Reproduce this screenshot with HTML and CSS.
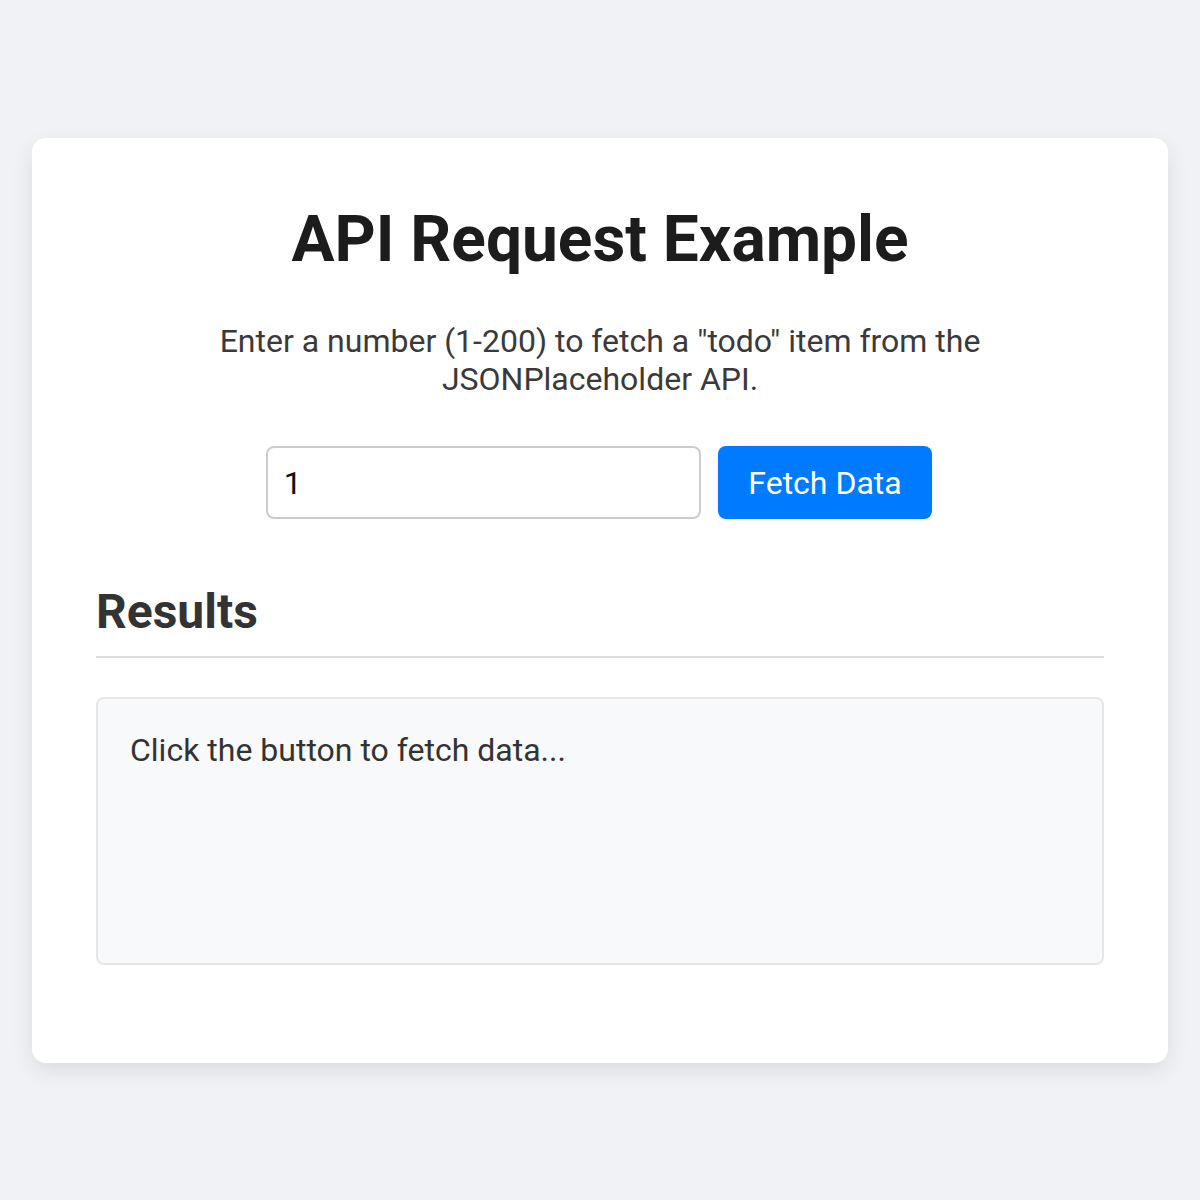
FILE: index.html
```html
<!DOCTYPE html>
<html lang="en">
<head>
<meta charset="utf-8">
<title>API Request Example</title>
<link rel="stylesheet" href="styles.css">
</head>
<body>
  <main class="card">
    <h1 class="title">API Request Example</h1>
    <p class="intro">Enter a number (1-200) to fetch a "todo" item from the JSONPlaceholder API.</p>
    <div class="controls">
      <input class="todo-input" type="number" value="1" min="1" max="200">
      <button class="fetch-btn" type="button">Fetch Data</button>
    </div>
    <h2 class="results-title">Results</h2>
    <div class="results-box">Click the button to fetch data...</div>
  </main>
</body>
</html>
```

FILE: styles.css
```css
html, body {
  margin: 0;
  padding: 0;
}

body {
  background: #f0f2f5;
  font-family: Roboto, "Liberation Sans", Arial, sans-serif;
  color: #333;
  padding: 138px 32px 0;
  min-height: 1200px;
  box-sizing: border-box;
}

.card {
  background: #ffffff;
  border-radius: 14px;
  box-shadow: 0 8px 22px rgba(0, 0, 0, 0.09);
  padding: 64px 64px 98px;
  box-sizing: border-box;
}

.title {
  margin: 0 0 45px;
  font-size: 64px;
  font-weight: 700;
  line-height: normal;
  color: #1c1c1c;
  text-align: center;
}

.intro {
  margin: 0 auto 48px;
  max-width: 800px;
  font-size: 32px;
  line-height: normal;
  color: #3a3a3a;
  text-align: center;
}

.controls {
  display: flex;
  justify-content: center;
  align-items: stretch;
  gap: 17px;
  height: 73px;
  margin-bottom: 64px;
  padding-right: 2px;
}

.todo-input {
  width: 435px;
  box-sizing: border-box;
  border: 2px solid #cccccc;
  border-radius: 8px;
  padding: 0 16px;
  font-family: Roboto, "Liberation Sans", Arial, sans-serif;
  font-size: 32px;
  color: #111;
  background: #fff;
  -moz-appearance: textfield;
}

.todo-input::-webkit-outer-spin-button,
.todo-input::-webkit-inner-spin-button {
  -webkit-appearance: none;
  margin: 0;
}

.fetch-btn {
  box-sizing: border-box;
  padding: 0 30.5px;
  border: none;
  border-radius: 8px;
  background: #007bff;
  color: #ffffff;
  font-family: Roboto, "Liberation Sans", Arial, sans-serif;
  font-size: 32px;
  cursor: pointer;
}

.results-title {
  margin: 0 0 39px;
  padding-bottom: 16px;
  font-size: 48px;
  font-weight: 700;
  line-height: normal;
  color: #333;
  border-bottom: 2px solid #dddddd;
}

.results-box {
  min-height: 200px;
  padding: 32px;
  border: 2px solid #e6e6e6;
  border-radius: 8px;
  background: #f8f9fa;
  font-size: 32px;
  line-height: normal;
  color: #333;
}
```
